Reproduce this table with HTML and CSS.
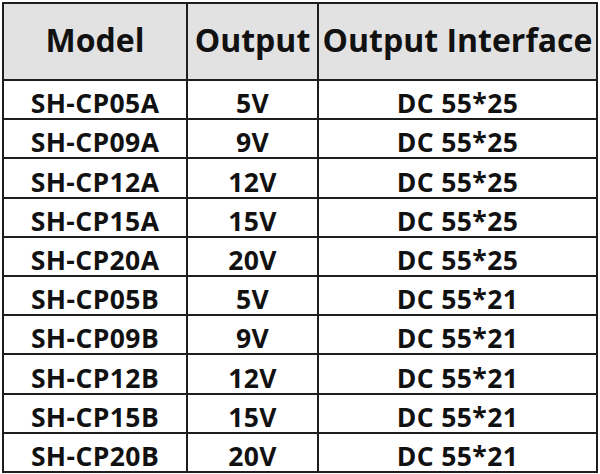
FILE: index.html
```html
<!DOCTYPE html>
<html>
<head>
<meta charset="utf-8">
<link rel="stylesheet" href="styles.css">
</head>
<body>
<div class="wrap">
<table class="spec">
  <thead>
    <tr><th class="c1">Model</th><th class="c2">Output</th><th class="c3">Output Interface</th></tr>
  </thead>
  <tbody>
    <tr><td>SH-CP05A</td><td>5V</td><td>DC 55*25</td></tr>
    <tr><td>SH-CP09A</td><td>9V</td><td>DC 55*25</td></tr>
    <tr><td>SH-CP12A</td><td>12V</td><td>DC 55*25</td></tr>
    <tr><td>SH-CP15A</td><td>15V</td><td>DC 55*25</td></tr>
    <tr><td>SH-CP20A</td><td>20V</td><td>DC 55*25</td></tr>
    <tr><td>SH-CP05B</td><td>5V</td><td>DC 55*21</td></tr>
    <tr><td>SH-CP09B</td><td>9V</td><td>DC 55*21</td></tr>
    <tr><td>SH-CP12B</td><td>12V</td><td>DC 55*21</td></tr>
    <tr><td>SH-CP15B</td><td>15V</td><td>DC 55*21</td></tr>
    <tr><td>SH-CP20B</td><td>20V</td><td>DC 55*21</td></tr>
  </tbody>
</table>
</div>
</body>
</html>
```
FILE: styles.css
```css
html, body {
  margin: 0;
  padding: 0;
  background: #ffffff;
}
.wrap {
  padding: 2px;
}
.spec {
  border-collapse: separate;
  border-spacing: 0;
  border-left: 2px solid #1e1e1e;
  border-top: 2px solid #1e1e1e;
  table-layout: fixed;
  width: 596px;
  font-family: "Open Sans", "Noto Sans", sans-serif;
  font-weight: 700;
  color: #111111;
}
.spec th, .spec td {
  box-sizing: border-box;
  border-right: 2px solid #1e1e1e;
  border-bottom: 2px solid #1e1e1e;
  padding: 0;
  text-align: center;
  white-space: nowrap;
  overflow: visible;
}
.spec th {
  background: #e2e2e2;
  height: 77px;
  font-size: 32px;
  line-height: 44px;
  padding: 0 0 4px 0;
}
.spec td {
  height: 39.2px;
  font-size: 26.5px;
  letter-spacing: 0.4px;
  line-height: 29px;
  padding-top: 8.2px;
}
.c1 { width: 184px; }
.c2 { width: 131px; }
.c3 { width: 279px; }
```
